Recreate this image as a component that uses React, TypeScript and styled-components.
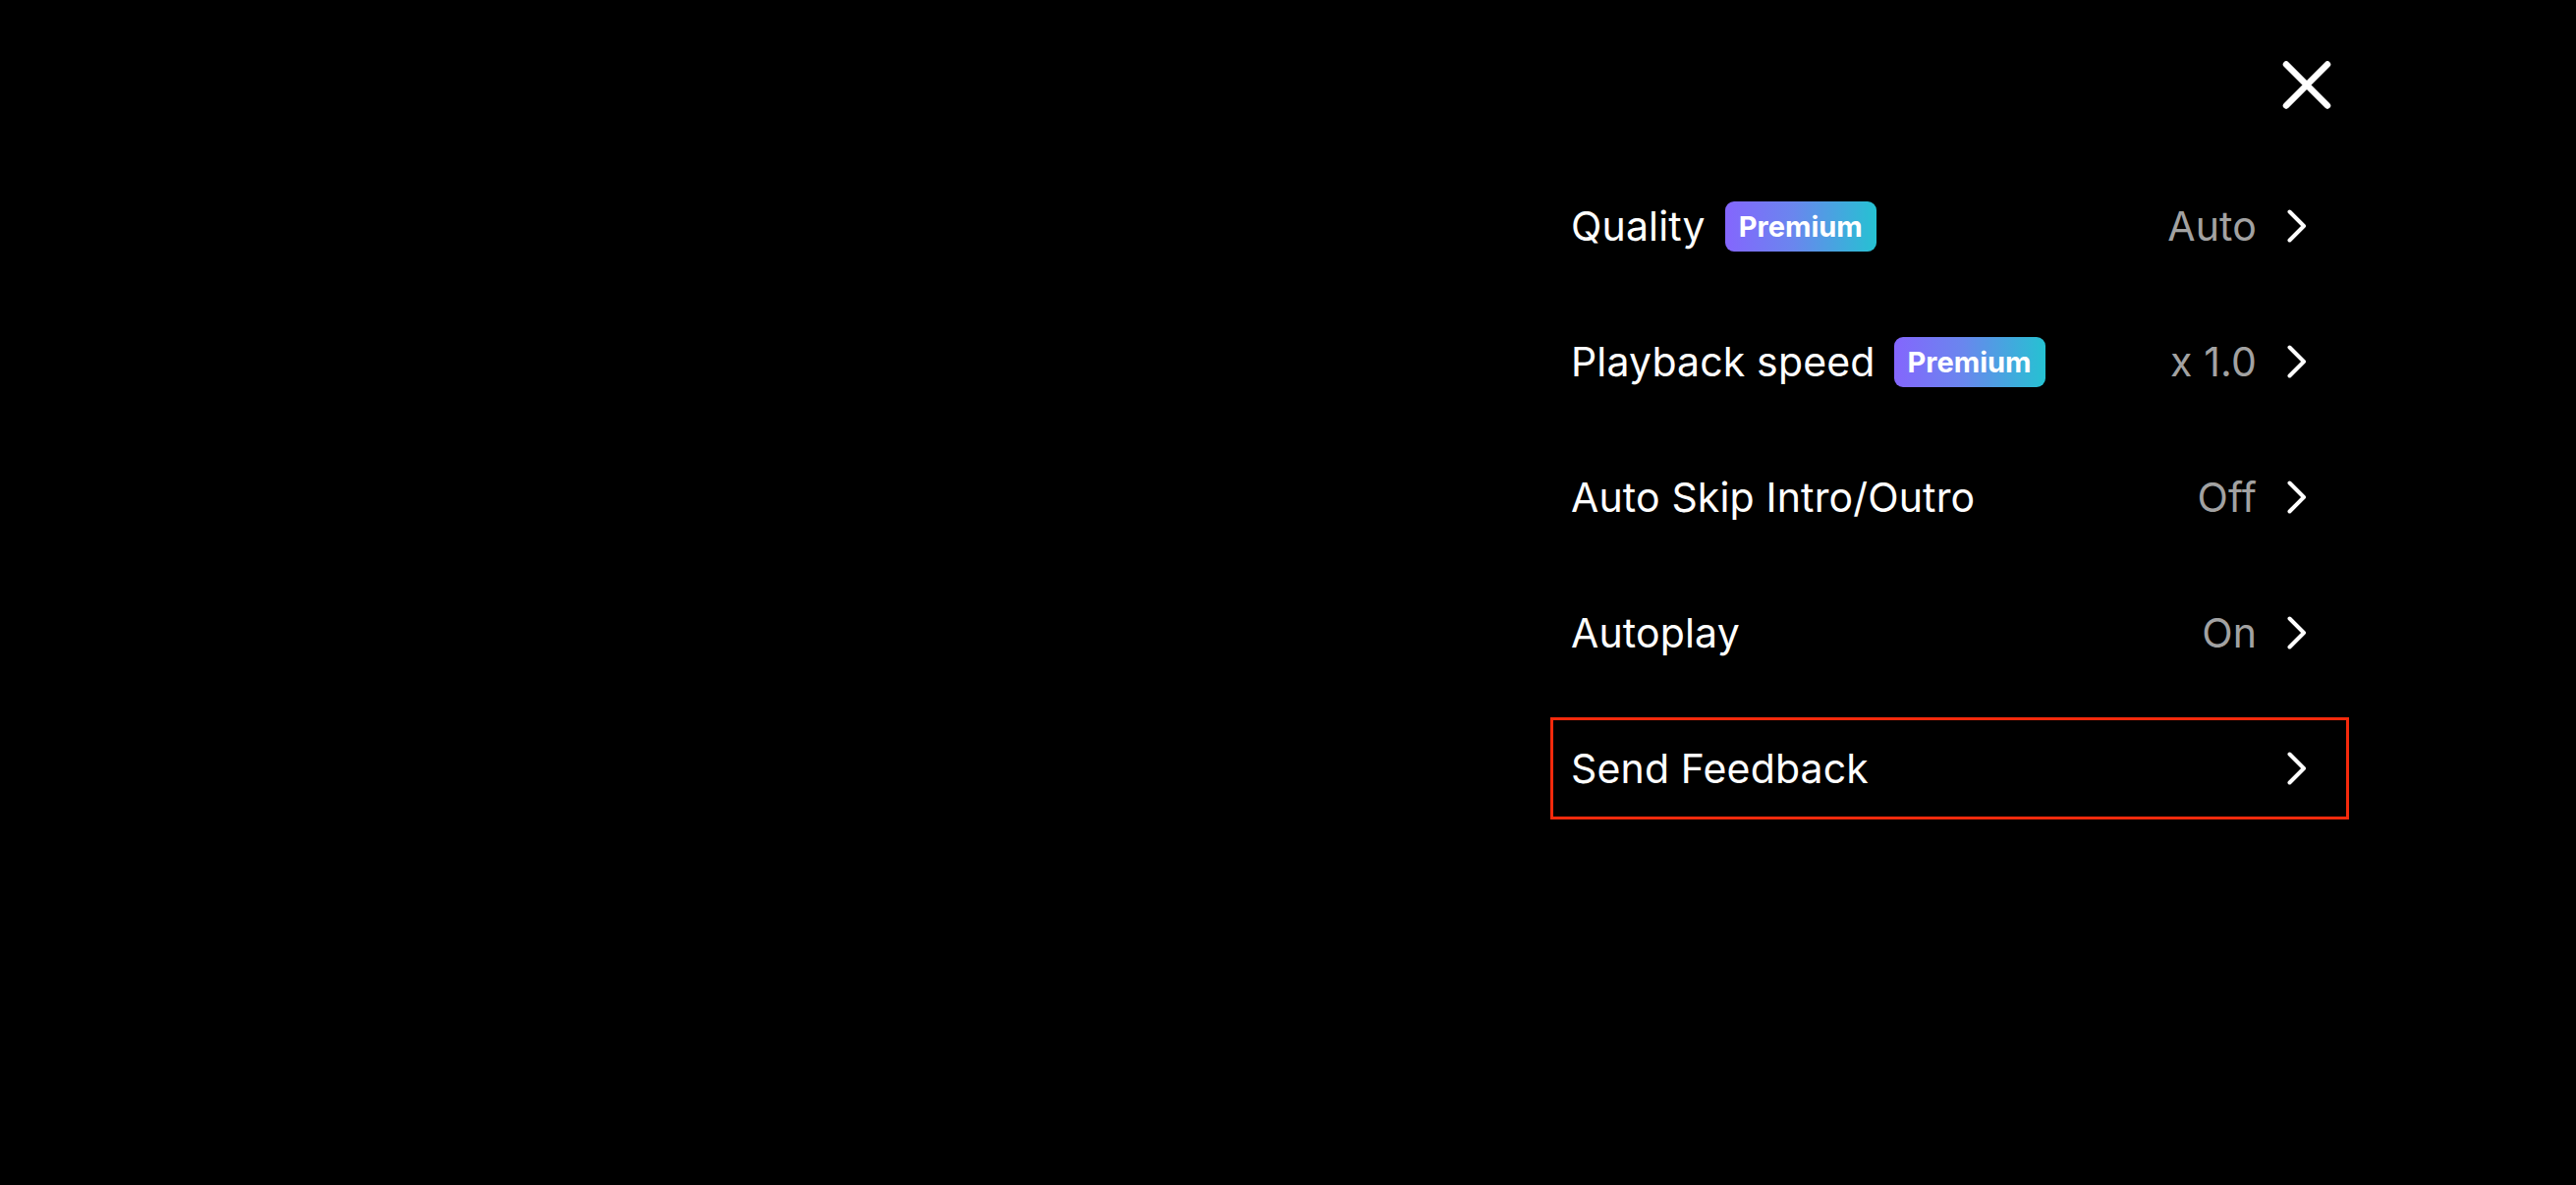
import React from 'react';
import styled, { createGlobalStyle } from 'styled-components';

const GlobalStyle = createGlobalStyle`
  html, body {
    margin: 0;
    padding: 0;
    background: #000;
  }
  body {
    font-family: Inter, "Noto Sans", "Liberation Sans", sans-serif;
    -webkit-font-smoothing: antialiased;
  }
`;

const Screen = styled.div`
  width: 2622px;
  height: 1206px;
  background: #000;
  display: flex;
  justify-content: flex-end;
  padding-right: 231px;
  box-sizing: border-box;
`;

const Panel = styled.div`
  width: 813px;
  display: flex;
  flex-direction: column;
`;

const Header = styled.div`
  display: flex;
  justify-content: flex-end;
  padding: 62px 18px 0 0;
  height: 178px;
  box-sizing: border-box;
`;

const CloseButton = styled.button`
  width: 50px;
  height: 49px;
  padding: 0;
  border: none;
  background: none;
  cursor: pointer;
  display: flex;
`;

const Menu = styled.ul`
  list-style: none;
  margin: 0;
  padding: 0;
  display: flex;
  flex-direction: column;
  gap: 34px;
`;

const Row = styled.li<{ $focused?: boolean }>`
  height: 104px;
  box-sizing: border-box;
  border: 3px solid ${(p) => (p.$focused ? '#f52a0c' : 'transparent')};
  padding: 0 40px 0 18px;
  display: flex;
  align-items: center;
  cursor: pointer;
`;

const Label = styled.span`
  color: #fff;
  font-size: 41px;
  font-weight: 400;
  letter-spacing: 0.15px;
`;

const Badge = styled.span<{ $gap: number }>`
  margin-left: ${(p) => p.$gap}px;
  height: 51px;
  padding: 0 14px;
  border-radius: 9px;
  display: inline-flex;
  align-items: center;
  background: linear-gradient(90deg, #8466fd 0%, #6a86ee 45%, #25c2d2 100%);
  color: #fff;
  font-size: 29px;
  font-weight: 700;
`;

const Value = styled.span`
  margin-left: auto;
  color: #a2a2a2;
  font-size: 41px;
  font-weight: 400;
  letter-spacing: 0.15px;
`;

const Chevron = styled.svg<{ $alone?: boolean }>`
  width: 20px;
  height: 34px;
  margin-left: ${(p) => (p.$alone ? 'auto' : '31px')};
  flex-shrink: 0;
`;

type Item = {
  label: string;
  premium?: boolean;
  value?: string;
  gap?: number;
};

const items: Item[] = [
  { label: 'Quality', premium: true, value: 'Auto', gap: 20 },
  { label: 'Playback speed', premium: true, value: 'x 1.0', gap: 19 },
  { label: 'Auto Skip Intro/Outro', value: 'Off' },
  { label: 'Autoplay', value: 'On' },
  { label: 'Send Feedback' },
];

const ChevronIcon = ({ alone }: { alone: boolean }) => (
  <Chevron viewBox="0 0 20 34" $alone={alone}>
    <polyline
      points="2.5,2.5 17,17 2.5,31.5"
      fill="none"
      stroke="#fff"
      strokeWidth="4"
      strokeLinecap="round"
      strokeLinejoin="round"
    />
  </Chevron>
);

const App = () => {
  const focused = 4; // remote focus sits on the last row

  return (
    <>
      <GlobalStyle />
      <Screen>
        <Panel>
          <Header>
            <CloseButton aria-label="Close">
              <svg width="50" height="49" viewBox="0 0 50 49">
                <path
                  d="M4 3.5 L46 45.5 M46 3.5 L4 45.5"
                  stroke="#fff"
                  strokeWidth="6.5"
                  strokeLinecap="round"
                />
              </svg>
            </CloseButton>
          </Header>
          <Menu>
            {items.map((item, index) => (
              <Row key={item.label} $focused={index === focused}>
                <Label>{item.label}</Label>
                {item.premium && <Badge $gap={item.gap ?? 20}>Premium</Badge>}
                {item.value && <Value>{item.value}</Value>}
                <ChevronIcon alone={!item.value} />
              </Row>
            ))}
          </Menu>
        </Panel>
      </Screen>
    </>
  );
};

export default App;
